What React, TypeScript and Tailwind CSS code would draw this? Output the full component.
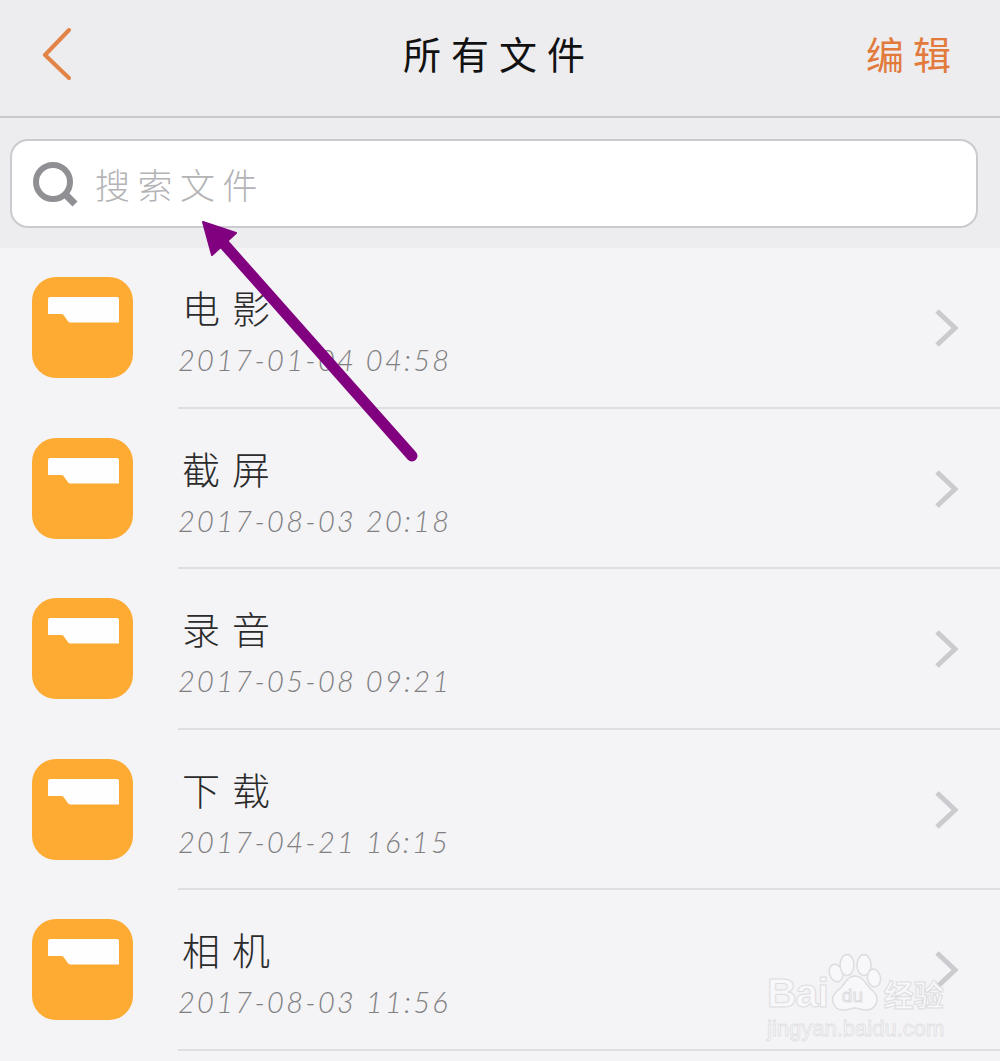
import React from "react";

const cjk = "font-['Noto_Sans_CJK_SC','Noto_Sans_CJK_JP',sans-serif]";

const folders = [
  { name: "电影", date: "2017-01-04 04:58" },
  { name: "截屏", date: "2017-08-03 20:18" },
  { name: "录音", date: "2017-05-08 09:21" },
  { name: "下载", date: "2017-04-21 16:15" },
  { name: "相机", date: "2017-08-03 11:56" },
];

const FolderIcon = () => (
  <div className="h-[101px] w-[101px] shrink-0 rounded-[24px] bg-[#fdab32] pl-[16px] pt-[20px]">
    <svg width="71" height="26" viewBox="0 0 71 26">
      <path
        d="M2 0H69a2 2 0 0 1 2 2V25.500H22.500a3 3 0 0 1-2.300-1L15.500 18a3 3 0 0 0-2.300-1H0V2a2 2 0 0 1 2-2z"
        fill="#fefefe"
      />
    </svg>
  </div>
);

const Row = ({ name, date }: { name: string; date: string }) => (
  <div className="flex h-[160.5px] pl-[32px]">
    <div className="pt-[29px]">
      <FolderIcon />
    </div>
    <div className="ml-[45px] flex flex-1 items-start justify-between border-b-2 border-[#dedde1] pr-[40px]">
      <div className="pl-[4px] pt-[36px]">
        <div className={`${cjk} text-[38px] font-light leading-[46px] tracking-[12px] text-[#2b2b2b]`}>
          {name}
        </div>
        <div className="-ml-[4px] mt-[13px] font-['Lato',sans-serif] text-[29px] font-light italic leading-[34px] tracking-[2.300px] whitespace-pre text-[#7f7f81]">
          {date}
        </div>
      </div>
      <svg width="26" height="40" viewBox="0 0 26 40" className="mt-[60px]" fill="none">
        <path d="M3 3L21 20L3 37" stroke="#cbcace" strokeWidth="5" />
      </svg>
    </div>
  </div>
);

const Arrow = () => (
  <svg
    width="260"
    height="270"
    viewBox="190 210 260 270"
    className="absolute left-[190px] top-[210px]"
    fill="none"
  >
    <path d="M412 456L224 244" stroke="#800080" strokeWidth="11" strokeLinecap="round" />
    <path d="M203 222L236 233L212 255Z" fill="#800080" stroke="#800080" strokeWidth="2" strokeLinejoin="round" />
  </svg>
);

const wmText = "text-[#f8f7f9] [-webkit-text-stroke:1px_#dddce0]";

const Watermark = () => (
  <div className="absolute left-[767px] top-[953px] flex w-[182px] flex-col">
    <div className="flex items-end">
      <span className={`font-['Liberation_Sans',sans-serif] text-[41px] font-bold leading-[36px] tracking-[-1px] ${wmText}`}>
        Bai
      </span>
      <div className="relative h-[58px] w-[54px]">
        <svg width="54" height="58" viewBox="0 0 54 58" fill="#f8f7f9" stroke="#dddce0" strokeWidth="1.500">
          <ellipse cx="8" cy="20" rx="6.500" ry="9" transform="rotate(-20 8 20)" />
          <ellipse cx="19" cy="12" rx="7" ry="10.500" />
          <ellipse cx="36" cy="12" rx="7" ry="10.500" />
          <ellipse cx="46" cy="25" rx="6.500" ry="9" transform="rotate(-10 46 25)" />
          <path d="M27 23C36 23 38 33 45 38C53 45 48 57 38 57C33 57 31 55 27 55C23 55 21 57 15 57C5 57 1 45 9 38C17 33 18 23 27 23Z" />
        </svg>
        <span className={`absolute bottom-[4px] left-[14px] font-['Liberation_Sans',sans-serif] text-[19px] leading-[22px] ${wmText}`}>
          du
        </span>
      </div>
      <span className={`${cjk} ml-[2px] text-[30px] font-bold leading-[36px] ${wmText}`}>
        经验
      </span>
    </div>
    <span className="mt-[6px] font-['Liberation_Sans',sans-serif] text-[22px] leading-[24px] text-[#f8f7f9] [-webkit-text-stroke:0.8px_#e0dfe3]">
      jingyan.baidu.com
    </span>
  </div>
);

export default function App() {
  return (
    <div className="relative h-[1061px] w-[1000px] overflow-hidden bg-[#f4f3f6]">
      {/* Header */}
      <header className="flex h-[118px] items-center justify-between border-b-2 border-[#c9c8cb] bg-[#edecee] pb-[10px] pl-[42px] pr-[40px]">
        <svg width="30" height="56" viewBox="0 0 30 56" fill="none" className="mt-[6px]">
          <path d="M27 2L3 27L27 50" stroke="#e28347" strokeWidth="4" strokeLinecap="round" strokeLinejoin="round" />
        </svg>
        <h1 className={`${cjk} ml-[60px] text-[38px] font-normal leading-[48px] tracking-[10px] text-[#111111]`}>
          所有文件
        </h1>
        <button className={`${cjk} text-[38px] font-normal leading-[48px] tracking-[9px] text-[#e27a3c]`}>
          编辑
        </button>
      </header>

      {/* Search */}
      <div className="h-[130px] bg-[#edecee] pl-[10px] pr-[22px] pt-[21px]">
        <div className="flex h-[89px] items-center rounded-[18px] border-2 border-[#cbcace] bg-white pl-[20px]">
          <svg width="48" height="48" viewBox="0 0 48 48" fill="none" className="mt-[2px]">
            <circle cx="21" cy="21" r="17" stroke="#909094" strokeWidth="6" />
            <path d="M33 33L43 43" stroke="#909094" strokeWidth="7" />
          </svg>
          <span className={`${cjk} ml-[15px] text-[35px] font-light leading-[44px] tracking-[7.500px] text-[#b4b3b6]`}>
            搜索文件
          </span>
        </div>
      </div>

      {/* Folder list */}
      <div>
        {folders.map((f) => (
          <Row key={f.name} name={f.name} date={f.date} />
        ))}
      </div>

      <Watermark />
      <Arrow />
    </div>
  );
}
